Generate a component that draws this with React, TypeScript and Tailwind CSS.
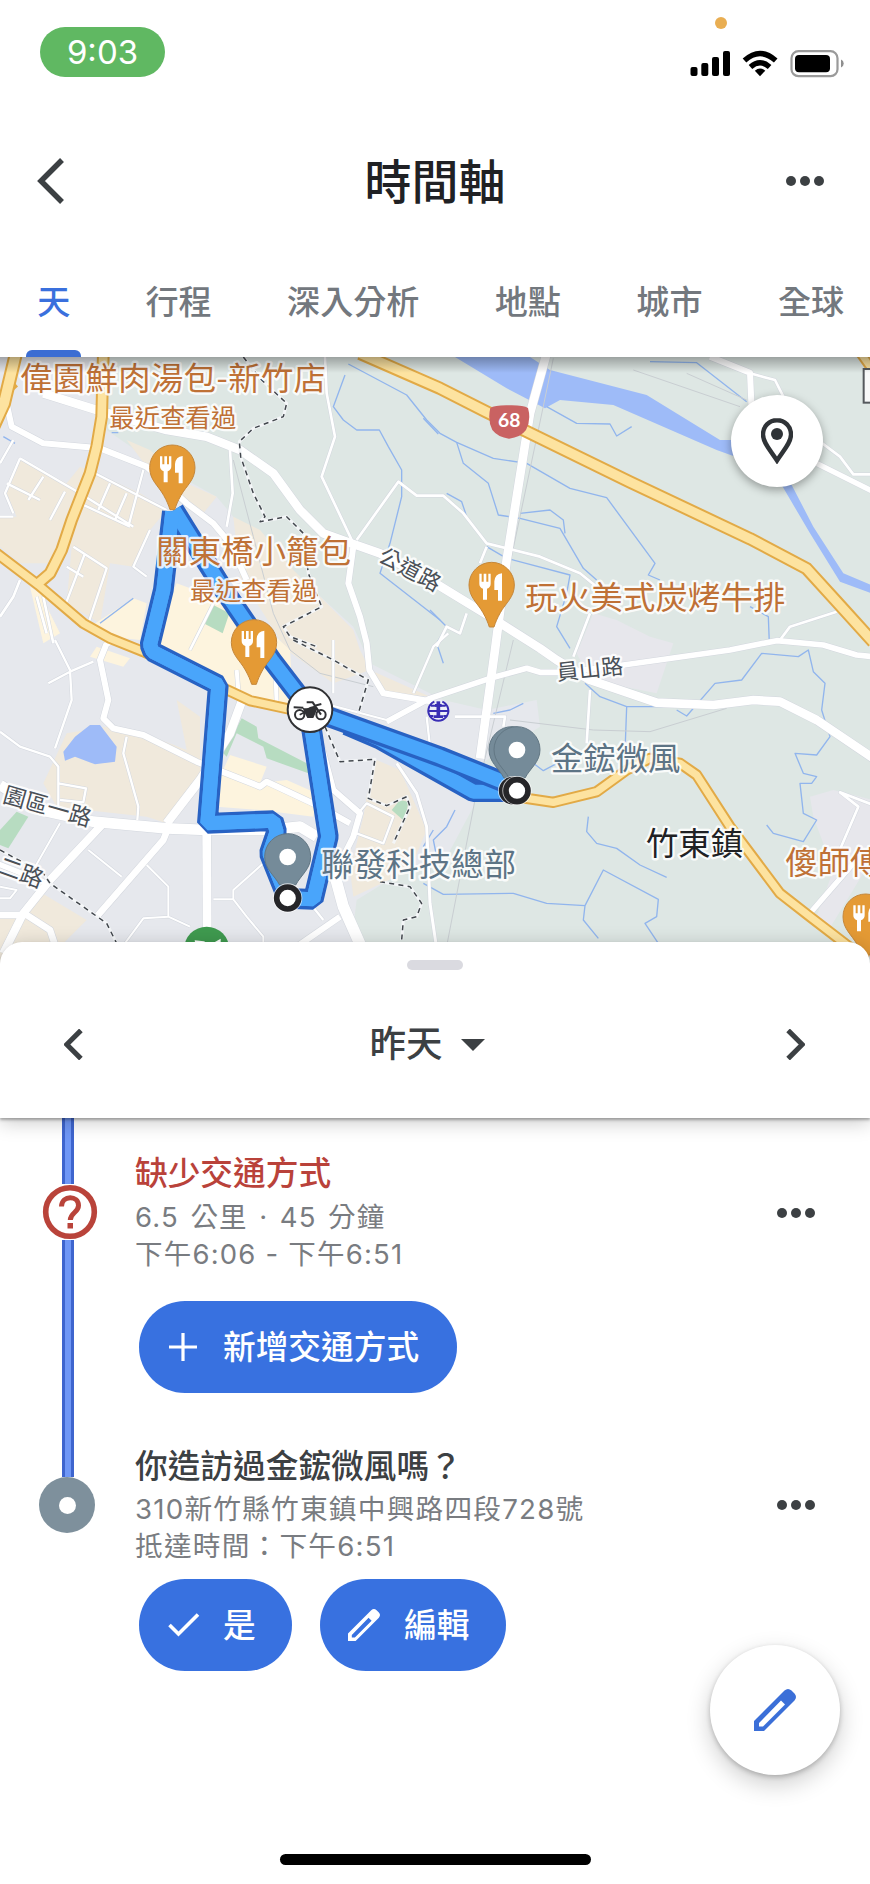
import type { ReactNode } from 'react';

type Line = { d: string; w: number };

const CJK = '"Noto Sans CJK TC", sans-serif';

const beigeAreas = [
  'M60 330L200 400L240 350L290 370L420 430L500 480L450 540L400 650L330 640L300 820L200 760L215 590L150 640L60 640L0 590V500L50 500L20 430Z',
  'M380 270L450 300L560 400L650 440L610 490L440 350Z',
  'M700 500L780 540L880 660L1060 840L1080 900L1110 960L1000 1000L860 900L720 680Z',
  'M1110 960L1290 1040L1150 1025Z',
  'M530 1050L600 1100V1280L500 1420L440 1400L170 1370L130 1300L200 1150L320 1130L430 1150L560 1200Z',
  'M1130 1230L1200 1260L1280 1440L1230 1560L1060 1640L1050 1560L1090 1400L1100 1340Z',
  'M110 1620L260 1710L180 1790L120 1850H0V1700L60 1690Z',
];
const creamAreas = [
  'M530 700L640 740L720 760L870 900L880 1070L760 1040L560 950L470 880L500 780Z',
  'M400 745L440 760L420 870L330 860L270 830Z',
  'M90 710L120 730L180 850L130 880Z',
  'M290 890L390 925L370 950L270 920Z',
  'M690 1215L800 1250L780 1300L860 1290L950 1330L940 1400L780 1380L650 1370L660 1280Z',
];
const parks = [
  'M640 765L688 790L668 850L615 822Z',
  'M725 1105L770 1130L775 1165L920 1240L925 1270L800 1225L790 1190L710 1150L680 1220L670 1210Z',
  'M0 1440L50 1385L85 1400L25 1495L0 1485Z',
  'M1200 1350L1225 1355L1215 1415L1175 1380Z',
];
const streams = [
  'M1035 75L1000 170L1030 210L1070 240L1138 240L1165 290L1205 360L1205 440L1170 580L1140 670L1320 810',
  'M1045 42L1220 135L1280 210L1320 250L1370 277L1480 325L1580 340L1710 415L1820 443L1965 640L1945 675L1980 690',
  'M1270 205L1315 252M1370 277L1390 340L1465 400L1495 495L1560 505L1680 535L1750 655L1790 690',
  'M1560 490L1650 480L1690 510L1695 550',
  'M1340 430L1385 455L1400 500M1460 590L1520 625L1710 675L1700 730L1670 830L1710 895',
  'M1640 170L1730 220L1830 222L1850 258L1895 230',
  'M1950 35L2090 38L2240 155',
  'M1290 780L1340 830L1310 880L1330 940',
  'M2250 770L2305 800L2308 880',
  'M1755 1000L1800 1040L1880 1070L1990 1070M1880 1070L1876 1180',
  'M2030 1080L2060 1098L2145 1000L2225 990L2285 910L2395 920L2425 900L2440 965L2475 1000L2465 1080L2490 1160L2450 1215L2385 1210L2410 1270L2450 1280L2435 1300L2400 1300L2410 1390L2450 1410L2410 1475L2320 1450L2300 1425',
  'M1365 1380L1340 1430L1300 1470L1310 1520',
  'M1765 1400L1760 1445L1790 1480L1850 1495L1920 1545L2000 1582',
  'M1270 1490L1300 1440M1270 1600L1330 1633L1540 1630L1640 1660L1755 1667L1810 1560L1975 1648L1970 1700L1935 1720L1975 1780M1755 1667L1750 1710L1795 1765',
  'M1480 1090L1530 1080L1570 1060M1600 1240L1630 1262L1690 1230',
  'M300 820L400 745M10 260L45 280M335 248L355 248',
];
const rails = [
  'M1660 25L1615 240L1560 500L1530 640',
  'M700 330L760 560L820 790L870 900L960 970L1120 1010',
  'M1900 60L2220 170M2060 70L2240 150',
  'M1530 1110L1780 1140L1950 1145L2180 1075M1540 870L1425 1350L1330 1840',
];
const roads: Line[] = [
  { d: 'M130 130L290 180L500 240L620 260L720 300L820 370L900 480L970 550L1060 582L1140 610L1290 690L1470 800L1620 895L1670 930L1770 990L1970 1058L2140 1065L2260 1050L2340 1055L2450 1110L2620 1225', w: 26 },
  { d: 'M20 160L35 230L130 280L300 295L440 350L560 460L640 520L690 580L740 690', w: 18 },
  { d: 'M1640 10L1590 190L1520 630L1485 900L1440 1225', w: 26 },
  { d: 'M1160 1115L1290 1045L1470 985L1580 955L1620 967H1690L1870 945L2190 900L2330 872L2470 885L2570 915L2620 920', w: 17 },
  { d: 'M1060 590L1045 700L1080 800L1100 880L1108 960L1150 1030L1300 1055', w: 18 },
  { d: 'M975 21L980 130L1005 260L965 380L1060 580M1070 570L1195 395L1250 437H1330L1390 490L1460 580L1620 620L1740 670L1790 710', w: 8 },
  { d: 'M690 300L698 430L680 530', w: 8 },
  { d: 'M60 325L240 430L400 530M20 400L120 450M60 325L15 430L40 490M130 380L85 450M195 425L150 510M285 370L500 480M240 460L390 530M330 400L295 480M380 430L345 510M430 360L385 530M220 590L320 655L265 820M200 650L250 680M255 610L190 780M450 540L400 650L440 680M0 500H40M40 270L0 340', w: 7 },
  { d: 'M130 740L160 880M110 740L140 850M640 760L570 900M60 690L40 740L0 800', w: 8 },
  { d: 'M320 880L300 930L325 1050L310 1105L340 1135L430 1155L590 1235L780 1310L800 1295L960 1370L1050 1420', w: 18 },
  { d: 'M165 870L210 960L215 1050L165 1195M145 1000L210 965L280 935M0 1145L60 1190L150 1220L175 1250V1380M175 1300L258 1315L250 1357L180 1350M380 1160L370 1210L415 1370L412 1410', w: 7 },
  { d: 'M0 1305L120 1380L280 1415L500 1435L620 1440H800L900 1430L950 1460', w: 32 },
  { d: 'M725 1055L690 1150L600 1290L500 1420', w: 26 },
  { d: 'M310 1420L150 1590L70 1690L10 1810', w: 24 },
  { d: 'M500 1445L490 1470L290 1700', w: 20 },
  { d: 'M620 1440L622 1850', w: 26 },
  { d: 'M-10 1540L140 1600', w: 16 },
  { d: 'M0 1695H80L150 1740L170 1800', w: 20 },
  { d: 'M265 1500L365 1580M440 1545L505 1610V1700L430 1705L360 1800M505 1700L570 1730M640 1648H700V1620L790 1540M700 1648L740 1700L790 1760V1850M180 1420L100 1560M0 1610L50 1620L30 1645H0', w: 6 },
  { d: 'M1000 1560L1030 1670L1110 1850', w: 34 },
  { d: 'M1020 1700L890 1790M965 1190L1000 1320L1080 1390L1060 1460L1000 1580', w: 18 },
  { d: 'M1070 1450L1150 1480L1180 1400L1100 1360L1075 1390M1240 1030L1300 890L1345 850M1000 870V1030M1280 1100L1290 1190M930 1660L970 1710', w: 7 },
  { d: 'M1190 1240L1250 1330L1280 1430L1290 1660L1315 1830', w: 9 },
  { d: 'M2130 20L2250 68L2255 180', w: 18 },
  { d: 'M2250 70L2325 90L2350 140M2460 275L2520 320L2560 373H2620M2340 870L2370 830L2510 785M1770 790L1720 920M1770 1020L1760 1180M1310 890L1340 830L1380 850L1400 790M1460 590L1440 640M1365 1100H1515L1510 1130M2620 1365L2520 1327L2575 1370L2515 1510', w: 8 },
  { d: 'M2450 340L2620 425M2560 1540L2430 1690', w: 16 },
  { d: 'M970 1060L1160 1110', w: 6 },
  { d: 'M825 940L830 1060M710 960L715 1020', w: 12 },
  { d: 'M320 870L335 880', w: 20 },
];
const highways: Line[] = [
  { d: 'M48 10L12 160L-20 230', w: 42 },
  { d: 'M0 150L50 105', w: 12 },
  { d: 'M310 10L305 200L290 290L270 370L215 510L185 600L150 670L115 700', w: 38 },
  { d: 'M-10 610L115 705L250 820L330 865L430 905L640 1000L750 1052L870 1078', w: 34 },
  { d: 'M1080 10L1320 115L1460 186L1890 396L2250 566L2420 656L2520 766L2620 876', w: 40 },
  { d: 'M1545 1340L1660 1357L1790 1325L1880 1260L1950 1225L2040 1240L2090 1275L2190 1430L2340 1630L2430 1700L2560 1800', w: 34 },
  { d: 'M2575 0L2625 70', w: 32 },
];
const borders = [
  'M730 21L785 90L860 160L850 200L760 235L718 275L722 320L760 430L795 500L780 515L860 500L910 550L925 670L965 770L850 830L870 860L950 890M880 870L1000 930L1105 990L1075 1090',
  'M975 1130L1020 1235L1125 1228L1105 1345L1160 1367L1220 1340L1230 1370L1180 1480M1140 1595L1230 1610L1265 1660L1250 1700L1210 1710L1205 1770',
  'M0 1500L130 1570L150 1600L320 1720L355 1790',
];
const routes = [
  'M1040 1125L1140 1168L1420 1325H1545',
  'M517 485L490 720L450 885L458 905L655 1005L622 1420L820 1412L830 1445L808 1510L862 1645L940 1648L985 1460L935 1140L930 1080',
  'M522 480L665 710L815 930L930 1080L1320 1220L1510 1296',
];

function Utensils({ x, y }: { x: number; y: number }) {
  return (
    <g transform={`translate(${x} ${y})`} fill="#fff">
      <path d="M-37-33h7v24h6v-24h8v24h6v-24h7v30q0 11-11 15v33h-12v-33q-11-4-11-15z" />
      <path d="M31-34v82H19V16H8v-26q2-22 23-24z" />
    </g>
  );
}

function FoodPin({ x, y }: { x: number; y: number }) {
  return (
    <g>
      <path
        transform={`translate(${x} ${y})`}
        d="M0-67A68 68 0 0 1 68 1C68 38 42 55 26 84C16 102 12 112 7 127H-7C-12 112-16 102-26 84C-42 55-68 38-68 1A68 68 0 0 1 0-67Z"
        fill="#e49a35"
        stroke="#c5873a"
        strokeWidth="3"
      />
      <Utensils x={x} y={y} />
    </g>
  );
}

function GrayPin({ x, y }: { x: number; y: number }) {
  return (
    <g transform={`translate(${x} ${y})`}>
      <path d="M0-70A69 69 0 0 1 69-1C69 36 40 54 24 84H-24C-40 54-69 36-69-1A69 69 0 0 1 0-70Z" fill="#758b99" stroke="#627784" strokeWidth="3" />
      <circle r="25" fill="#fff" />
    </g>
  );
}

function EndPoint({ x, y }: { x: number; y: number }) {
  return (
    <g>
      <circle cx={x} cy={y} r="44" fill="#fff" opacity=".7" />
      <circle cx={x} cy={y} r="33" fill="#fff" stroke="#252528" strokeWidth="17" />
    </g>
  );
}

type LabelProps = { x: number; y: number; len?: number; size?: number; color: string; rotate?: number; anchor?: 'start' | 'middle' | 'end'; halo?: string; children: ReactNode };

function Label({ x, y, len, size = 97, color, rotate = 0, anchor = 'start', halo = '#fff', children }: LabelProps) {
  return (
    <text
      x={x}
      y={y}
      transform={`rotate(${rotate} ${x} ${y})`}
      fontSize={size}
      fontFamily={CJK}
      fill={color}
      stroke={halo}
      strokeWidth="14"
      strokeLinejoin="round"
      strokeOpacity=".85"
      paintOrder="stroke"
      textAnchor={anchor}
      textLength={len}
    >
      {children}
    </text>
  );
}

function MapView() {
  const food = '#bf7136';
  const slate = '#5d7485';
  return (
    <svg viewBox="0 21 2610 1827" className="block h-[609px] w-full" lang="zh-Hant">
      <rect y="21" width="2610" height="1827" fill="#dee7e4" />
      <path d="M0 21H330L320 240L450 330L650 440L700 500L1060 830L1110 940L1330 1050L1460 1080L1610 1050L1620 1130L1430 1250L1420 1370L1330 1540L1200 1570L1070 1650L1060 1730L1110 1850H0Z" fill="#e6e8ed" />
      <path d="M1780 790L1850 810L1950 860L2020 880L1970 1030L1770 990L1730 910Z" fill="#e7e7ec" />
      <path d="M2430 1340L2500 1320L2620 1350V1520L2480 1750L2450 1700L2500 1560L2440 1400Z" fill="#e7e7ec" />
      {beigeAreas.map((d) => <path key={d} d={d} fill="#f0e9dc" />)}
      {creamAreas.map((d) => <path key={d} d={d} fill="#fdf4de" />)}
      {parks.map((d) => <path key={d} d={d} fill="#b7dcc1" />)}
      <g fill="#9ebbf8">
        <path d="M1365 21H1590L1650 60L1940 135L2160 270H2200V318L2150 300L1840 165L1680 150L1635 175L1520 115Z" />
        <path d="M2345 405H2375L2440 530L2530 670L2620 708V732L2520 695L2430 550Z" />
        <path d="M270 1125H300L350 1190L345 1235L285 1243L225 1220L195 1232L190 1205L225 1160Z" />
      </g>
      <g fill="none" strokeLinejoin="round">
        {streams.map((d) => <path key={d} d={d} stroke="#91b5ed" strokeWidth="4" />)}
        {rails.map((d) => <path key={d} d={d} stroke="#c9ced2" strokeWidth="3" />)}
        {roads.map((r) => <path key={r.d} d={r.d} stroke="#d3d7de" strokeWidth={r.w + 3} />)}
        {roads.map((r) => <path key={r.d} d={r.d} stroke="#fff" strokeWidth={r.w} />)}
        {highways.map((r) => <path key={r.d} d={r.d} stroke="#e2aa46" strokeWidth={r.w} />)}
        {highways.map((r) => <path key={r.d} d={r.d} stroke="#fde3a0" strokeWidth={r.w - 12} />)}
        {borders.map((d) => <path key={d} d={d} stroke="#f4f6f8" strokeWidth="9" />)}
        {borders.map((d) => <path key={d} d={d} stroke="#42474d" strokeWidth="4.5" strokeDasharray="15 13" />)}
        {routes.map((d) => (
          <g key={d}>
            <path d={d} stroke="#2862c3" strokeWidth="62" strokeLinejoin="bevel" />
            <path d={d} stroke="#49a5fb" strokeWidth="42" strokeLinejoin="bevel" />
          </g>
        ))}
        <path d={routes[1]} stroke="#49a5fb" strokeWidth="42" strokeLinejoin="bevel" />
      </g>

      <path d="M1471 174Q1484 165 1527 166Q1570 165 1584 174Q1594 210 1578 240Q1562 262 1527 266Q1494 262 1477 240Q1462 210 1471 174Z" fill="#c96262" />
      <text x="1528" y="232" fontSize="58" fontWeight="700" fontFamily="Lato, sans-serif" fill="#fff" textAnchor="middle">68</text>
      <rect x="2591" y="57" width="60" height="101" fill="#f8f9f9" stroke="#55595d" strokeWidth="6" />

      <g stroke="#3a2fb4" strokeWidth="6" fill="none">
        <circle cx="1315" cy="1083" r="33" fill="#edf0f8" stroke="none" />
        <path d="M1303 1055A30 30 0 1 0 1327 1055M1284 1083H1346M1293 1067H1337M1287 1098H1300M1330 1098H1343" />
        <path d="M1305 1066H1325M1301 1100H1329" strokeWidth="8" />
        <path d="M1315 1054V1100" strokeWidth="11" />
      </g>

      <Label x={60} y={119} len={918} color={food}>偉園鮮肉湯包-新竹店</Label>
      <Label x={328} y={230} len={381} size={76} color={food}>最近查看過</Label>
      <Label x={469} y={638} len={584} color={food}>關東橋小籠包</Label>
      <Label x={570} y={750} len={382} size={76} color={food}>最近查看過</Label>
      <Label x={1576} y={777} len={780} color={food}>玩火美式炭烤牛排</Label>
      <Label x={1219} y={679} len={200} size={66} color="#4a5057" rotate={28} anchor="middle">公道路</Label>
      <Label x={1772} y={981} len={200} size={66} color="#4a5057" rotate={-6} anchor="middle">員山路</Label>
      <Label x={136} y={1393} len={272} size={68} color="#4a5057" rotate={16} anchor="middle">園區一路</Label>
      <Label x={120} y={1615} size={70} color="#4a5057" rotate={20} anchor="end">二路</Label>
      <Label x={964} y={1578} len={584} color={slate}>聯發科技總部</Label>
      <Label x={1653} y={1260} len={388} color={slate}>金鋐微風</Label>
      <Label x={1938} y={1514} len={291} color="#202124">竹東鎮</Label>
      <Label x={2356} y={1573} color={food}>傻師傅</Label>

      <FoodPin x={517} y={352} />
      <FoodPin x={762} y={876} />
      <FoodPin x={1475} y={704} />
      <FoodPin x={2597} y={1699} />
      <GrayPin x={1536} y={1200} />
      <GrayPin x={1551} y={1200} />
      <EndPoint x={1538} y={1322} />
      <EndPoint x={1551} y={1322} />
      <GrayPin x={863} y={1521} />
      <EndPoint x={863} y={1644} />

      <g transform="translate(930 1079)">
        <circle r="67" fill="#fff" stroke="#303134" strokeWidth="6" />
        <g fill="none" stroke="#303134" strokeWidth="6">
          <circle cx="-31" cy="15" r="14" />
          <circle cx="33" cy="15" r="14" />
          <path d="M-49-7L-20-6M-10-22H8L33 15M14-12L34-17" />
        </g>
        <path d="M-22-6Q-8-2 0-8L14-12L22-2L10 25H-8L-18 6Z" fill="#303134" />
        <path d="M-31 15L-10 5" stroke="#303134" strokeWidth="5" />
      </g>

      <g transform="translate(620 1798)">
        <circle r="68" fill="#3f9a4f" />
        <path d="M-36-27L-8-24L10-14L42-32V10H-30Z" fill="#fff" />
        <path d="M-8-30L26-22L22 4L6-6Z" fill="#3f9a4f" />
      </g>
    </svg>
  );
}

function Dots() {
  return (
    <svg viewBox="0 0 40 12" className="h-3 w-10 fill-[#3c4043]">
      <circle cx="6" cy="6" r="5" />
      <circle cx="20" cy="6" r="5" />
      <circle cx="34" cy="6" r="5" />
    </svg>
  );
}

function Chevron({ className, flip, stroke = 5.5 }: { className: string; flip?: boolean; stroke?: number }) {
  return (
    <svg viewBox="0 0 28 46" className={className} fill="none" stroke="#3c4043" strokeWidth={stroke}>
      <path d={flip ? 'M3 2L24 23L3 44' : 'M25 2L4 23L25 44'} />
    </svg>
  );
}

function Pencil({ className }: { className: string }) {
  return (
    <svg viewBox="0 0 42 42" className={className} fill="currentColor" fillRule="evenodd">
      <path d="M0 32L30.5 1.5Q34 -1.5 37.5 1.5L40.5 4.5Q43.500 8 40.500 11.500L10 42H0ZM5 34V37.500H9L31 15.500L27 11.500Z" />
    </svg>
  );
}

function StatusBar() {
  return (
    <div className="flex h-[113px] items-start justify-between pl-10 pr-[26px]">
      <div className="mt-[27px] flex h-[50px] w-[125px] items-center justify-center rounded-full bg-[#60b862] text-[33px] leading-none text-white">9:03</div>
      <svg viewBox="690 10 154 70" className="mt-[10px] h-[70px] w-[154px]">
        <circle cx="721" cy="23" r="6" fill="#e9ae52" />
        <rect x="690.500" y="67" width="7" height="9" rx="2" />
        <rect x="701.300" y="63" width="7" height="13" rx="2" />
        <rect x="712" y="57" width="7" height="19" rx="2" />
        <rect x="723" y="51" width="7" height="25" rx="2" />
        <g fill="none" stroke="#000" strokeWidth="5.400">
          <path d="M744.500 60.500Q760 46.500 775.700 60.500" />
          <path d="M750.500 67Q760 58.500 769.600 67" />
        </g>
        <path d="M754.800 70.700Q760 66.300 765.300 70.700L760 76.200Z" />
        <rect x="791.500" y="51.200" width="46" height="25" rx="7" fill="none" stroke="#9a9a9a" strokeWidth="2.200" />
        <rect x="795" y="55" width="35" height="17.300" rx="4" />
        <path d="M841 59.500Q843.700 60.500 843.700 63.500T841 67.500Z" fill="#8f8f8f" />
      </svg>
    </div>
  );
}

const tabs = ['天', '行程', '深入分析', '地點', '城市', '全球'];

function Tabs() {
  return (
    <nav className="flex h-[108px] gap-[75.400px] pl-[37.500px] text-[33.100px] font-medium whitespace-nowrap text-[#73787e]">
      {tabs.map((t, i) => (
        <div key={t} className={i === 0 ? 'flex w-[32.600px] shrink-0 flex-col items-center justify-between text-[#3a70dd]' : 'shrink-0'}>
          <span className="block pt-[31px] leading-[44px]">{t}</span>
          {i === 0 && <span className="h-[7px] w-[55px] shrink-0 rounded-t-md bg-[#3b6dd3]" />}
        </div>
      ))}
    </nav>
  );
}

const pill = 'flex h-[92px] items-center rounded-full bg-[#3871e0] text-[32.700px] font-medium leading-none text-white';

export default function App() {
  return (
    <div lang="zh-Hant" className="relative flex h-[1884px] w-[870px] flex-col overflow-hidden bg-white font-['Inter','Noto_Sans_CJK_TC',sans-serif] text-[#3c4043]">
      <StatusBar />
      <header className="flex h-[136px] items-center justify-between pl-[37px] pr-[45px]">
        <Chevron className="h-[46px] w-7" />
        <h1 className="pl-[20px] text-[47px] leading-none font-medium text-[#202124]">時間軸</h1>
        <Dots />
      </header>
      <Tabs />

      <div className="relative h-[585px] shrink-0">
        <MapView />
        <div className="absolute inset-x-0 top-0 h-4 bg-gradient-to-b from-black/30 to-transparent" />
        <button className="absolute top-[38px] right-[47px] flex h-[92px] w-[92px] items-center justify-center rounded-full bg-white shadow-[0_3px_10px_rgba(0,0,0,0.35)]">
          <svg viewBox="0 0 32 46" className="h-[46px] w-8">
            <path d="M16 2.200C8 2.200 2 8.500 2 16.500C2 25 10 33 16 42.500C22 33 30 25 30 16.500C30 8.500 24 2.200 16 2.200Z" fill="none" stroke="#2f3337" strokeWidth="4.400" />
            <circle cx="16" cy="16" r="6" fill="#2f3337" />
          </svg>
        </button>
      </div>

      <section className="relative z-10 flex h-[176px] shrink-0 flex-col items-center rounded-t-[22px] bg-white shadow-[0_2px_3px_rgba(0,0,0,0.3),0_4px_20px_rgba(0,0,0,0.22)]">
        <span className="mt-[18px] h-[10px] w-14 rounded-full bg-[#dadae0]" />
        <div className="flex w-full items-center justify-between pt-[43px] pr-[65px] pl-16">
          <Chevron className="h-[31px] w-[19px]" stroke={7.5} />
          <div className="flex items-center gap-[18px] pr-[15px] text-[36.500px] leading-[62px] font-medium">
            <span>昨天</span>
            <svg viewBox="0 0 24 12" className="mt-0.5 h-3 w-6 fill-[#3c4043]"><path d="M0 0H24L12 12Z" /></svg>
          </div>
          <Chevron className="h-[31px] w-[19px]" flip stroke={7.5} />
        </div>
      </section>

      <main className="flex flex-col">
        <div className="flex h-[314px]">
          <div className="flex w-[135px] shrink-0 flex-col items-start pl-[42px]">
            <div className="ml-5 h-[66px] w-3 border-x-[3px] border-[#3e65ce] bg-[#6f97f6]" />
            <svg viewBox="0 0 56 56" className="h-14 w-14">
              <circle cx="28" cy="28" r="24.300" fill="#fff" stroke="#b9433a" strokeWidth="5.600" />
              <path d="M19.500 22.500C20 10.500 36.500 11.500 36.500 21.500C36.500 28.500 28.500 28.500 28.300 36" fill="none" stroke="#b9433a" strokeWidth="5" />
              <rect x="25.500" y="39" width="5.500" height="5.500" fill="#b9433a" />
            </svg>
            <div className="ml-5 w-3 grow border-x-[3px] border-[#3e65ce] bg-[#6f97f6]" />
          </div>
          <div className="flex grow flex-col items-start">
            <h2 className="mt-[32px] text-[32.700px] leading-[46px] font-medium text-[#b9423a]">缺少交通方式</h2>
            <p className="mt-[3px] text-[27.500px] leading-[37px] tracking-[1.200px] [word-spacing:2.500px] text-[#797c81]">6.5 公里 · 45 分鐘</p>
            <p className="text-[27.500px] leading-[37px] tracking-[1.200px] text-[#797c81]">下午6:06 - 下午6:51</p>
            <button className={`${pill} mt-[28px] ml-1 w-[318px] gap-[26px] pl-[30px]`}>
              <svg viewBox="0 0 28 28" className="h-7 w-7" stroke="#fff" strokeWidth="3.200"><path d="M14 0V28M0 14H28" /></svg>
              <span>新增交通方式</span>
            </button>
          </div>
          <div className="mt-[89px] mr-[54px]"><Dots /></div>
        </div>

        <div className="flex h-[300px]">
          <div className="flex w-[135px] shrink-0 flex-col items-start pl-[39px]">
            <div className="ml-[23px] h-[45px] w-3 border-x-[3px] border-[#3e65ce] bg-[#6f97f6]" />
            <div className="flex h-14 w-14 items-center justify-center rounded-full bg-[#7e909c]"><span className="h-[17px] w-[17px] rounded-full bg-white" /></div>
          </div>
          <div className="flex grow flex-col items-start">
            <h2 className="mt-[11px] text-[32.700px] leading-[46px] font-medium text-[#3c4043]">你造訪過金鋐微風嗎？</h2>
            <p className="mt-[2px] text-[27.700px] leading-[37px] tracking-[1.200px] text-[#797c81]">310新竹縣竹東鎮中興路四段728號</p>
            <p className="text-[27.700px] leading-[37px] tracking-[1.200px] text-[#797c81]">抵達時間：下午6:51</p>
            <div className="mt-[14px] ml-1 flex gap-7">
              <button className={`${pill} w-[153px] gap-[23px] pl-[29px]`}>
                <svg viewBox="0 0 32 26" className="h-[26px] w-8" fill="none" stroke="#fff" strokeWidth="3.600"><path d="M1.500 13L10.500 22L30 2.500" /></svg>
                <span>是</span>
              </button>
              <button className={`${pill} w-[186px] gap-6 pl-7`}>
                <Pencil className="h-8 w-8" />
                <span>編輯</span>
              </button>
            </div>
          </div>
          <div className="mt-[67px] mr-[54px]"><Dots /></div>
        </div>
      </main>

      <button className="absolute right-[30px] bottom-[109px] flex h-[130px] w-[130px] items-center justify-center rounded-full bg-white text-[#3b6fd8] shadow-[0_2px_5px_rgba(0,0,0,0.22),0_9px_24px_rgba(0,0,0,0.2)]">
        <Pencil className="h-[42px] w-[42px]" />
      </button>
      <div className="absolute bottom-[19px] left-[280px] h-[11px] w-[311px] rounded-full bg-black" />
    </div>
  );
}
